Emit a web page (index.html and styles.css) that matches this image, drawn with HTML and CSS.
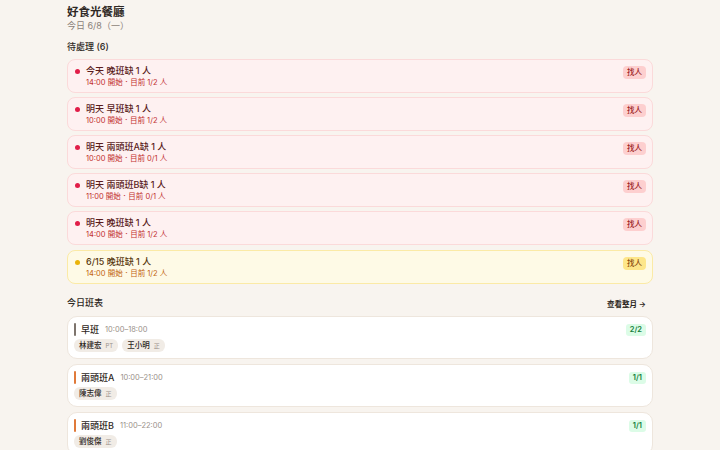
FILE: index.html
```html
<!DOCTYPE html>
<html lang="zh-Hant">
<head>
  <meta charset="UTF-8">
  <meta name="viewport" content="width=device-width, initial-scale=1.0">
  <title>好食光餐廳</title>
  <link rel="stylesheet" href="styles.css">
</head>
<body>
<div class="container">
  <header class="page-head">
    <h1>好食光餐廳</h1>
    <p class="today">今日 6/8（一）</p>
  </header>

  <section>
    <h2 class="section-title">待處理 (6)</h2>
    <div class="todo-list">
      <div class="todo urgent">
        <span class="dot"></span>
        <div class="todo-text">
          <div class="todo-title">今天 晚班缺 1 人</div>
          <div class="todo-sub">14:00 開始．目前 1/2 人</div>
        </div>
        <span class="find">找人</span>
      </div>
      <div class="todo urgent">
        <span class="dot"></span>
        <div class="todo-text">
          <div class="todo-title">明天 早班缺 1 人</div>
          <div class="todo-sub">10:00 開始．目前 1/2 人</div>
        </div>
        <span class="find">找人</span>
      </div>
      <div class="todo urgent">
        <span class="dot"></span>
        <div class="todo-text">
          <div class="todo-title">明天 兩頭班A缺 1 人</div>
          <div class="todo-sub">10:00 開始．目前 0/1 人</div>
        </div>
        <span class="find">找人</span>
      </div>
      <div class="todo urgent">
        <span class="dot"></span>
        <div class="todo-text">
          <div class="todo-title">明天 兩頭班B缺 1 人</div>
          <div class="todo-sub">11:00 開始．目前 0/1 人</div>
        </div>
        <span class="find">找人</span>
      </div>
      <div class="todo urgent">
        <span class="dot"></span>
        <div class="todo-text">
          <div class="todo-title">明天 晚班缺 1 人</div>
          <div class="todo-sub">14:00 開始．目前 1/2 人</div>
        </div>
        <span class="find">找人</span>
      </div>
      <div class="todo later">
        <span class="dot"></span>
        <div class="todo-text">
          <div class="todo-title">6/15 晚班缺 1 人</div>
          <div class="todo-sub">14:00 開始．目前 1/2 人</div>
        </div>
        <span class="find">找人</span>
      </div>
    </div>
  </section>

  <section>
    <div class="row-head">
      <h2 class="section-title">今日班表</h2>
      <a class="month-link" href="#">查看整月 →</a>
    </div>
    <div class="shift-list">
      <div class="shift">
        <div class="shift-top">
          <span class="bar grey"></span>
          <span class="shift-name">早班</span>
          <span class="shift-time">10:00–18:00</span>
          <span class="count">2/2</span>
        </div>
        <div class="staff">
          <span class="chip">林建宏 <small>PT</small></span>
          <span class="chip">王小明 <small>正</small></span>
        </div>
      </div>
      <div class="shift">
        <div class="shift-top">
          <span class="bar orange"></span>
          <span class="shift-name">兩頭班A</span>
          <span class="shift-time">10:00–21:00</span>
          <span class="count">1/1</span>
        </div>
        <div class="staff">
          <span class="chip">陳志偉 <small>正</small></span>
        </div>
      </div>
      <div class="shift">
        <div class="shift-top">
          <span class="bar orange"></span>
          <span class="shift-name">兩頭班B</span>
          <span class="shift-time">11:00–22:00</span>
          <span class="count">1/1</span>
        </div>
        <div class="staff">
          <span class="chip">劉俊傑 <small>正</small></span>
        </div>
      </div>
    </div>
  </section>
</div>
</body>
</html>
```

FILE: styles.css
```css
body {
  margin: 0;
  background: #f8f4ef;
  font-family: Inter, "Noto Sans CJK TC", sans-serif;
  color: #2d2723;
}
.container {
  width: 586px;
  margin: 0 auto;
  padding-top: 5px;
}
.page-head h1 {
  margin: 0;
  font-size: 11.5px;
  line-height: 15px;
  font-weight: 700;
}
.today {
  margin: 0;
  font-size: 9px;
  line-height: 12px;
  color: #8a817a;
}
.section-title {
  margin: 0;
  font-size: 9px;
  line-height: 12px;
  font-weight: 500;
}
section > .section-title {
  margin-top: 9px;
  margin-bottom: 6px;
}

/* pending items */
.todo-list {
  display: flex;
  flex-direction: column;
  gap: 4px;
}
.todo {
  display: flex;
  align-items: flex-start;
  height: 34px;
  box-sizing: border-box;
  padding: 5px 6px 0 7px;
  border: 1px solid;
  border-radius: 8px;
}
.todo.urgent {
  background: #fef1f1;
  border-color: #fbdada;
}
.todo.later {
  background: #fefae6;
  border-color: #fbeaa6;
  margin-top: 1px;
}
.dot {
  width: 5px;
  height: 5px;
  border-radius: 50%;
  margin: 4px 6px 0 0;
  flex: none;
}
.urgent .dot { background: #e11d48; }
.later .dot { background: #eab308; }
.todo-text { flex: 1; }
.todo-title {
  font-size: 9px;
  line-height: 12px;
  font-weight: 500;
}
.todo-sub {
  font-size: 7.5px;
  line-height: 11px;
}
.urgent .todo-title { color: #5a1c1c; }
.urgent .todo-sub { color: #c2302f; }
.later .todo-title { color: #5a3a10; }
.later .todo-sub { color: #c2640f; }
.find {
  margin-top: 1px;
  padding: 2px 4px;
  border-radius: 4px;
  font-size: 7.5px;
  line-height: 9px;
  font-weight: 500;
}
.urgent .find { background: #fdcfcf; color: #9b1c1c; }
.later .find { background: #fde68a; color: #8a4b0c; }

/* today's schedule */
.row-head {
  display: flex;
  justify-content: space-between;
  align-items: center;
  margin: 13px 7px 7px 0;
}
.month-link {
  font-size: 7.5px;
  font-weight: 600;
  color: #2d2723;
  text-decoration: none;
}
.shift-list {
  display: flex;
  flex-direction: column;
  gap: 5px;
}
.shift {
  background: #fff;
  border: 1px solid #eee6dd;
  border-radius: 10px;
  padding: 5px 6px 6px 6px;
  height: 43px;
  box-sizing: border-box;
}
.shift-top {
  display: flex;
  align-items: center;
  height: 15px;
}
.bar {
  width: 2px;
  height: 13px;
  border-radius: 1px;
  margin-right: 5px;
}
.bar.grey { background: #7d746d; }
.bar.orange { background: #e07a3a; }
.shift-name {
  font-size: 9px;
  font-weight: 500;
  margin-right: 6px;
}
.shift-time {
  font-size: 7.5px;
  color: #9a918a;
  flex: 1;
}
.count {
  background: #dcfce7;
  color: #16803d;
  font-size: 7.5px;
  font-weight: 600;
  padding: 1px 4px;
  border-radius: 3px;
  line-height: 10px;
}
.staff {
  display: flex;
  gap: 4px;
  margin-top: 2px;
}
.chip {
  background: #f1ece6;
  border-radius: 6px;
  padding: 2px 5px;
  font-size: 7.5px;
  line-height: 9px;
  font-weight: 500;
}
.chip small {
  font-size: 6px;
  color: #9a918a;
  font-weight: 400;
  margin-left: 2px;
}
```
